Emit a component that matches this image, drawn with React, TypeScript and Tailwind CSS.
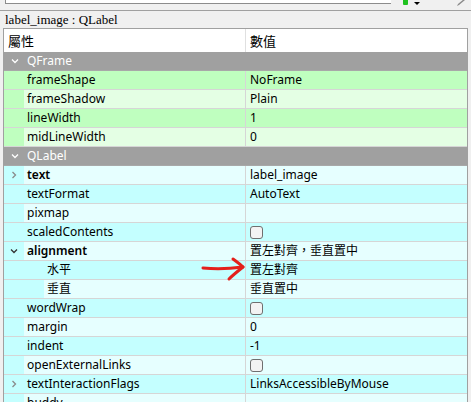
import React from 'react';

type Row =
  | { kind: 'group'; name: string }
  | {
      kind: 'prop';
      name: string;
      value?: string;
      check?: boolean;
      bold?: boolean;
      depth?: number;
      branch?: 'open' | 'closed';
      dark: string;
      light: string;
      alt: boolean;
    };

const GREEN = { dark: '#bfffbf', light: '#e4ffe4' };
const CYAN = { dark: '#c4ffff', light: '#e6ffff' };

const rows: Row[] = [
  { kind: 'group', name: 'QFrame' },
  { kind: 'prop', name: 'frameShape', value: 'NoFrame', ...GREEN, alt: false },
  { kind: 'prop', name: 'frameShadow', value: 'Plain', ...GREEN, alt: true },
  { kind: 'prop', name: 'lineWidth', value: '1', ...GREEN, alt: false },
  { kind: 'prop', name: 'midLineWidth', value: '0', ...GREEN, alt: true },
  { kind: 'group', name: 'QLabel' },
  { kind: 'prop', name: 'text', value: 'label_image', bold: true, branch: 'closed', ...CYAN, alt: true },
  { kind: 'prop', name: 'textFormat', value: 'AutoText', ...CYAN, alt: false },
  { kind: 'prop', name: 'pixmap', value: '', ...CYAN, alt: true },
  { kind: 'prop', name: 'scaledContents', check: true, ...CYAN, alt: false },
  { kind: 'prop', name: 'alignment', value: '置左對齊，垂直置中', bold: true, branch: 'open', ...CYAN, alt: true },
  { kind: 'prop', name: '水平', value: '置左對齊', depth: 1, ...CYAN, alt: false },
  { kind: 'prop', name: '垂直', value: '垂直置中', depth: 1, ...CYAN, alt: true },
  { kind: 'prop', name: 'wordWrap', check: true, ...CYAN, alt: false },
  { kind: 'prop', name: 'margin', value: '0', ...CYAN, alt: true },
  { kind: 'prop', name: 'indent', value: '-1', ...CYAN, alt: false },
  { kind: 'prop', name: 'openExternalLinks', check: true, ...CYAN, alt: true },
  { kind: 'prop', name: 'textInteractionFlags', value: 'LinksAccessibleByMouse', branch: 'closed', ...CYAN, alt: false },
  { kind: 'prop', name: 'buddy', value: '', ...CYAN, alt: true },
];

const Chevron = ({ open, color }: { open: boolean; color: string }) => (
  <svg width="8" height="8" viewBox="0 0 8 8" fill="none" stroke={color} strokeWidth="1.3">
    {open ? <path d="M1 2.5 L4 5.5 L7 2.5" /> : <path d="M2.5 1 L5.5 4 L2.5 7" />}
  </svg>
);

const Checkbox = () => (
  <div className="w-[13px] h-[13px] rounded-[3px] border border-[#6f6f6f] bg-[#f3f3f3]" />
);

const GroupRow = ({ name }: { name: string }) => (
  <div className="flex h-[19px] bg-[#a0a0a0] border-b border-[#a8a8a8] text-white">
    <div className="w-[20px] flex items-center justify-center pl-[1px]">
      <Chevron open color="#ffffff" />
    </div>
    <div className="flex items-center pl-[3px]">{name}</div>
  </div>
);

const PropRow = ({ row }: { row: Extract<Row, { kind: 'prop' }> }) => {
  const depth = row.depth ?? 0;
  const bg = row.alt ? row.light : row.dark;
  return (
    <div className="flex h-[19px] border-b border-[#d6d6d6]" style={{ backgroundColor: bg }}>
      <div className="flex w-[241px] shrink-0">
        <div
          className="flex items-center justify-center shrink-0"
          style={{ width: 20 + depth * 20, backgroundColor: row.dark }}
        >
          {row.branch && depth === 0 && (
            <Chevron open={row.branch === 'open'} color={row.branch === 'open' ? '#333333' : '#8a8a8a'} />
          )}
        </div>
        <div className={`flex items-center pl-[3px] text-black ${row.bold ? 'font-semibold' : ''}`}>
          {row.name}
        </div>
      </div>
      <div className="w-px bg-[#d6d6d6] shrink-0" />
      <div className="flex items-center pl-[4px] text-black whitespace-nowrap">
        {row.check ? <Checkbox /> : row.value}
      </div>
    </div>
  );
};

export default function App() {
  return (
    <div
      className="relative w-[471px] h-[402px] overflow-hidden bg-[#f0f0f0] text-[12px]"
      style={{ fontFamily: '"Noto Sans", "Noto Sans CJK TC", sans-serif' }}
    >
      {/* top toolbar fragment */}
      <div className="relative h-[10px] flex items-start">
        <div className="ml-[5px] w-[386px] h-[4px] bg-white border-l border-b border-[#8c8c8c]" />
        <div className="ml-[12px] w-[5px] h-[5px] bg-[#1fc21f] rounded-b-[1px]" />
        <div className="ml-[6px] mt-[2px] w-0 h-0 border-l-[3px] border-r-[3px] border-t-[3px] border-l-transparent border-r-transparent border-t-black" />
        <svg className="ml-auto mr-[5px]" width="10" height="6" viewBox="0 0 10 6">
          <path d="M9 0 L3 5 L1 6 L2 4 L8 -1 Z" fill="#8a8a8a" />
        </svg>
      </div>
      <div className="h-px bg-[#a0a0a0]" />
      <div
        className="h-[17px] pl-[5px] flex items-center text-[13px] text-black"
        style={{ fontFamily: '"Liberation Serif", "Noto Sans CJK TC", serif' }}
      >
        label_image : QLabel
      </div>

      {/* property tree */}
      <div className="ml-[3px] w-[465px] h-[400px] border-t border-l border-r border-[#a0a0a0] bg-white">
        <div className="flex h-[23px] bg-white">
          <div
            className="w-[241px] flex items-center pl-[4px] text-[13px] text-black"
            style={{ fontFamily: '"Noto Sans CJK TC", sans-serif' }}
          >
            屬性
          </div>
          <div className="w-px bg-[#e0e0e0]" />
          <div
            className="flex items-center pl-[4px] text-[13px] text-black"
            style={{ fontFamily: '"Noto Sans CJK TC", sans-serif' }}
          >
            數值
          </div>
        </div>
        {rows.map((row, i) =>
          row.kind === 'group' ? <GroupRow key={i} name={row.name} /> : <PropRow key={i} row={row} />
        )}
      </div>

      {/* hand-drawn red arrow */}
      <svg
        className="absolute left-[198px] top-[254px]"
        width="52"
        height="30"
        viewBox="0 0 52 30"
        fill="none"
        stroke="#e3201b"
        strokeWidth="3"
        strokeLinecap="round"
        strokeLinejoin="round"
      >
        <path d="M5 14 C 15 15, 30 15, 45 13" />
        <path d="M35 5 C 39 8, 42 10, 45 13 C 40 17, 35 21, 31 25" />
      </svg>
    </div>
  );
}
